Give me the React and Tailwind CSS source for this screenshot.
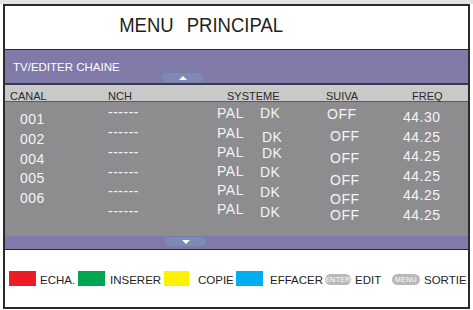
import React from 'react';

const canal = [
  ['001', 'mt-[7px]'],
  ['002', ''],
  ['004', ''],
  ['005', '-mt-[1px]'],
  ['006', ''],
];

const dashes = [
  ['------', 'mt-0'],
  ['------', ''],
  ['------', ''],
  ['------', ''],
  ['------', '-mt-[1px]'],
  ['------', ''],
];

const pal = [
  ['PAL', 'mt-[2px]'],
  ['PAL', 'mt-[1px]'],
  ['PAL', ''],
  ['PAL', ''],
  ['PAL', ''],
  ['PAL', ''],
];

const dk = [
  ['DK', 'mt-[1px]'],
  ['DK', 'mt-[4px] ml-[2px]'],
  ['DK', '-mt-[4px] ml-[2px]'],
  ['DK', '-mt-[1px]'],
  ['DK', ''],
  ['DK', ''],
];

const suiva = [
  ['OFF', 'mt-[2px]'],
  ['OFF', 'mt-[2px] ml-[3px]'],
  ['OFF', 'mt-[2px] ml-[3px]'],
  ['OFF', 'mt-[2px] ml-[3px]'],
  ['OFF', '-mt-[1px] ml-[3px]'],
  ['OFF', '-mt-[4px] ml-[3px]'],
];

const freq = [
  ['44.30', 'mt-[5px]'],
  ['44.25', ''],
  ['44.25', '-mt-[1px]'],
  ['44.25', ''],
  ['44.25', '-mt-[1px]'],
  ['44.25', ''],
];

const Column = ({ items, width, lead = 'leading-[20px] h-[20px]' }) => (
  <div className={`flex flex-col ${width}`}>
    {items.map(([t, c], i) => (
      <div key={i} className={`${lead} whitespace-pre ${c}`}>
        {t}
      </div>
    ))}
  </div>
);

const Pill = ({ down }) => (
  <div className="w-[41px] h-[9px] rounded-full bg-[#7b8bb6] flex items-center justify-center">
    {down ? (
      <div className="w-0 h-0 border-l-[4px] border-r-[4px] border-t-[4px] border-l-transparent border-r-transparent border-t-white" />
    ) : (
      <div className="w-0 h-0 border-l-[4px] border-r-[4px] border-b-[4px] border-l-transparent border-r-transparent border-b-white" />
    )}
  </div>
);

const KeyPill = ({ label, width }) => (
  <div
    className={`${width} h-[11px] mb-[1px] rounded-full bg-[#b9b9b9] text-white text-[7px] leading-[11px] text-center tracking-[0.3px]`}
  >
    {label}
  </div>
);

export default function App() {
  return (
    <div className="w-[473px] h-[310px] bg-white font-['Liberation_Sans',Arial,sans-serif] overflow-hidden">
      <div className="h-[4px] bg-[#e2e2e2]" />
      <div className="ml-[3px] w-[467px] h-[305px] border-2 border-[#2b2b2b] flex flex-col">
        {/* title */}
        <div className="h-[44px] shrink-0 border-b border-[#2b2b2b] bg-white pt-[8px]">
          <div className="ml-[96px] w-[200px] flex justify-center">
            <span className="inline-flex gap-[15px] text-[21px] leading-[21px] text-[#231f20] scale-x-[0.88]">
              <span>MENU</span>
              <span>PRINCIPAL</span>
            </span>
          </div>
        </div>

        {/* purple band */}
        <div className="h-[35px] shrink-0 border-b-2 border-[#3a3a4a] bg-[#7f7aa7] pt-[12px]">
          <div className="pl-[8px] text-[11.5px] leading-[11px] text-white">TV/EDITER CHAINE</div>
          <div className="ml-[157px]">
            <Pill />
          </div>
        </div>

        {/* header row */}
        <div className="h-[17px] shrink-0 border-b border-[#5c5c5c] bg-[#c9c9c9] pt-[6px] flex text-[11px] leading-[11px] text-[#2a2a2a]">
          <div className="ml-[5px] w-[98px]">CANAL</div>
          <div className="w-[119px]">NCH</div>
          <div className="w-[99px]">SYSTEME</div>
          <div className="w-[86px]">SUIVA</div>
          <div>FREQ</div>
        </div>

        {/* channel list */}
        <div className="h-[134px] shrink-0 bg-[#8d8d8f] flex text-[14px] tracking-[0.5px] text-[#f4f4f4]">
          <div className="ml-[15px]">
            <Column items={canal} width="w-[88px]" />
          </div>
          <Column items={dashes} width="w-[109px]" />
          <Column items={pal} width="w-[43px]" lead="leading-[19px] h-[19px]" />
          <Column items={dk} width="w-[67px]" />
          <Column items={suiva} width="w-[76px]" />
          <Column items={freq} width="w-[50px]" />
        </div>

        {/* bottom purple band */}
        <div className="h-[14px] shrink-0 border-b border-[#2b2b2b] bg-[#7f7aa7] pt-[1px]">
          <div className="ml-[160px]">
            <Pill down />
          </div>
        </div>

        {/* legend */}
        <div className="flex-1 bg-white pt-[21px]">
          <div className="flex items-end text-[11.5px] leading-[12px] text-[#231f20]">
            <div className="ml-[4px] w-[27px] h-[15px] bg-[#ed1c24]" />
            <div className="ml-[4px] w-[38px]">ECHA.</div>
            <div className="w-[27px] h-[15px] bg-[#00a651]" />
            <div className="ml-[5px] w-[54px]">INSERER</div>
            <div className="w-[25px] h-[15px] bg-[#fff200]" />
            <div className="ml-[9px] w-[38px]">COPIE</div>
            <div className="w-[27px] h-[15px] bg-[#00aeef]" />
            <div className="ml-[7px] w-[55px]">EFFACER</div>
            <KeyPill label="ENTER" width="w-[26px]" />
            <div className="ml-[4px] w-[37px]">EDIT</div>
            <KeyPill label="MENU" width="w-[28px]" />
            <div className="ml-[4px]">SORTIE</div>
          </div>
        </div>
      </div>
    </div>
  );
}
